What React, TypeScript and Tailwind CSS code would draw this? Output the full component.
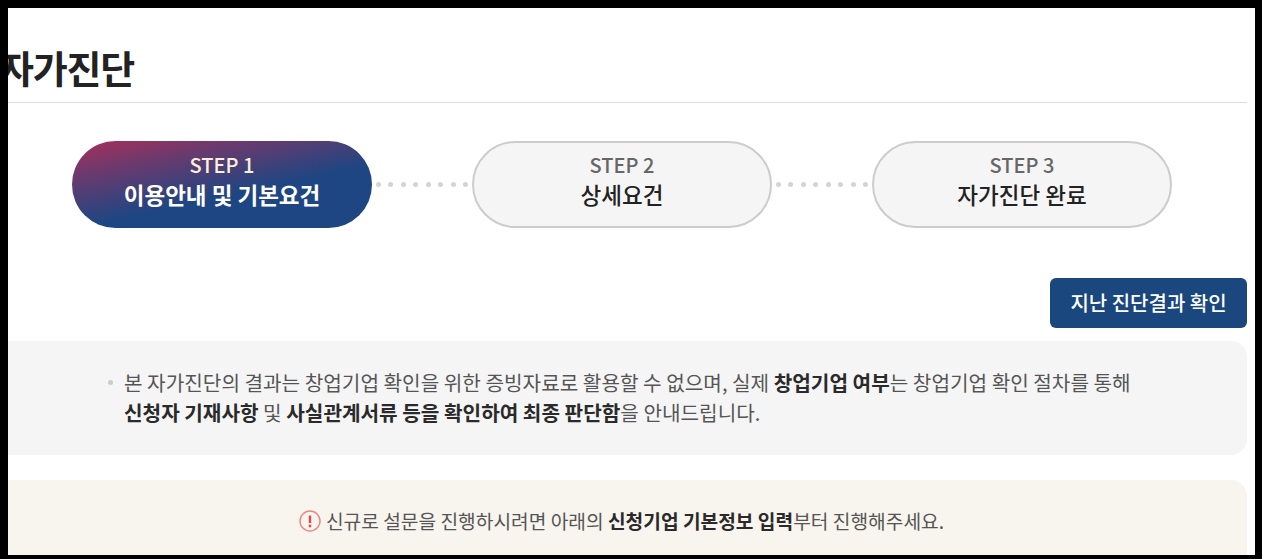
import { Fragment } from "react";

const steps = [
  { step: "STEP 1", label: "이용안내 및 기본요건", active: true },
  { step: "STEP 2", label: "상세요건", active: false },
  { step: "STEP 3", label: "자가진단 완료", active: false },
];

function StepDots() {
  return (
    <div className="flex w-[100px] items-center justify-between px-1">
      {Array.from({ length: 8 }).map((_, i) => (
        <span key={i} className="h-[5px] w-[5px] rounded-full bg-[#d4d4d4]" />
      ))}
    </div>
  );
}

function StepPill({ step, label, active }: { step: string; label: string; active: boolean }) {
  if (active) {
    return (
      <div className="flex h-[87px] w-[300px] flex-col items-center justify-center rounded-[44px] bg-[linear-gradient(168deg,#a0305c_3%,#6b3a6e_24%,#1e4682_58%,#1e4682_100%)] pb-[9px] text-white">
        <p className="text-[20px] leading-[28px] font-medium text-[#fdf0d8]">{step}</p>
        <p className="text-[22.5px] leading-[30px] font-bold">{label}</p>
      </div>
    );
  }
  return (
    <div className="flex h-[87px] w-[300px] flex-col items-center justify-center rounded-[44px] border-2 border-[#cccccc] bg-[#f5f5f5] pb-[9px]">
      <p className="text-[20px] leading-[28px] font-medium text-[#666666]">{step}</p>
      <p className="text-[22.5px] leading-[30px] font-medium text-[#222222]">{label}</p>
    </div>
  );
}

export default function App() {
  return (
    <div className="h-[559px] w-[1262px] overflow-hidden bg-black pt-2 pr-[7px] pb-1 pl-2 font-['Noto_Sans_CJK_KR',sans-serif]">
      <div className="h-full overflow-hidden bg-white pr-2">
        <div className="h-[95px] border-b border-[#dddddd]">
          <h1 className="-ml-[9px] pt-[32px] text-[38px] leading-[54px] font-bold tracking-[-1.2px] text-[#222222]">
            자가진단
          </h1>
        </div>

        <div className="mt-[38px] flex pl-[64px]">
          {steps.map((s, i) => (
            <Fragment key={s.step}>
              {i > 0 && <StepDots />}
              <StepPill {...s} />
            </Fragment>
          ))}
        </div>

        <div className="mt-[50px] flex justify-end">
          <button className="h-[50px] w-[197px] rounded-[6px] bg-[#1a477e] text-[20px] font-medium text-white">
            지난 진단결과 확인
          </button>
        </div>

        <div className="mt-[13px] flex h-[114px] flex-col justify-center rounded-r-[16px] bg-[#f5f5f5] pl-[116px] text-[20.2px] leading-[30px] text-[#555555]">
          <p className="relative">
            <span className="absolute top-[12px] -left-[16px] h-[5px] w-[5px] rounded-full bg-[#cccccc]" />
            본 자가진단의 결과는 창업기업 확인을 위한 증빙자료로 활용할 수 없으며, 실제{" "}
            <b className="font-bold text-[#2a2a2a]">창업기업 여부</b>는 창업기업 확인 절차를 통해
          </p>
          <p>
            <b className="font-bold text-[#2a2a2a]">신청자 기재사항</b> 및{" "}
            <b className="font-bold text-[#2a2a2a]">사실관계서류 등을 확인하여 최종 판단함</b>을 안내드립니다.
          </p>
        </div>

        <div className="mt-[25px] flex h-[90px] items-start justify-center rounded-tr-[16px] bg-[#f8f4ee] pt-[26px] pr-[12px] text-[19.2px] leading-[30px] text-[#555555]">
          <svg viewBox="0 0 22 22" className="mt-[4px] mr-[5px] h-[22px] w-[22px]" fill="none">
            <circle cx="11" cy="11" r="10" stroke="#e88a8a" strokeWidth="1.5" />
            <path d="M11 5.5v7.5" stroke="#e04a4a" strokeWidth="2.4" />
            <circle cx="11" cy="16" r="1.4" fill="#e04a4a" />
          </svg>
          <p>
            신규로 설문을 진행하시려면 아래의 <b className="font-bold text-[#2a2a2a]">신청기업 기본정보 입력</b>부터 진행해주세요.
          </p>
        </div>
      </div>
    </div>
  );
}
